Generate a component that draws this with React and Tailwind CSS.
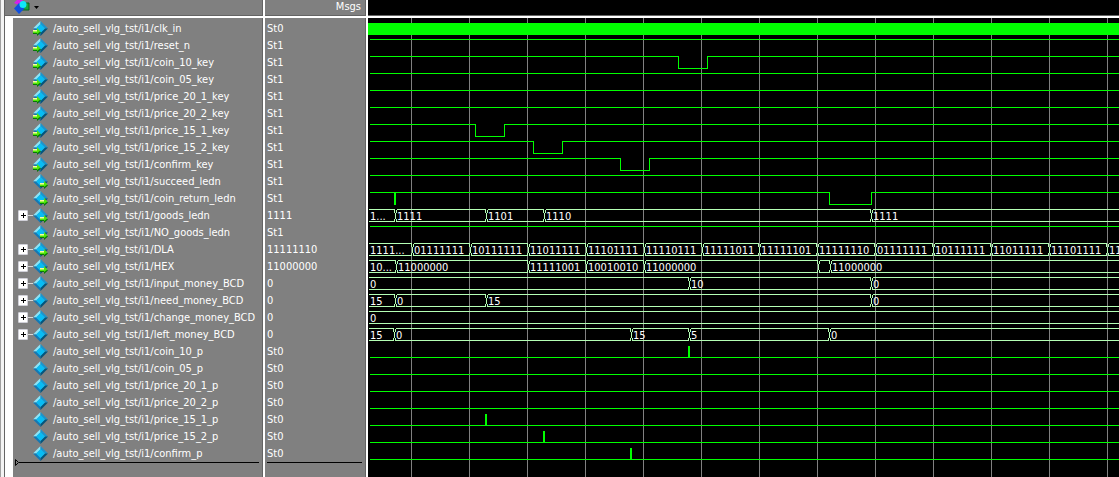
import React, { useState } from "react";

const PREFIX = "/auto_sell_vlg_tst/i1/";
const ROW = 17;
const FAR = 6000;

// kind: in / out port, or internal signal (no arrow)
// dips / pulses / steps are x positions on the wave canvas
const SIGNALS = [
  { name: "clk_in", kind: "in", value: "St0", clock: true },
  { name: "reset_n", kind: "in", value: "St1" },
  { name: "coin_10_key", kind: "in", value: "St1", dips: [[310, 339]] },
  { name: "coin_05_key", kind: "in", value: "St1" },
  { name: "price_20_1_key", kind: "in", value: "St1" },
  { name: "price_20_2_key", kind: "in", value: "St1" },
  { name: "price_15_1_key", kind: "in", value: "St1", dips: [[107, 136]] },
  { name: "price_15_2_key", kind: "in", value: "St1", dips: [[165, 194]] },
  { name: "confirm_key", kind: "in", value: "St1", dips: [[252, 281]] },
  { name: "succeed_ledn", kind: "out", value: "St1" },
  {
    name: "coin_return_ledn",
    kind: "out",
    value: "St1",
    dips: [
      [26, 27],
      [461, 503],
    ],
  },
  {
    name: "goods_ledn",
    kind: "out",
    value: "1111",
    steps: [
      [0, "1..."],
      [27, "1111"],
      [118, "1101"],
      [176, "1110"],
      [503, "1111"],
    ],
  },
  { name: "NO_goods_ledn", kind: "out", value: "St1" },
  {
    name: "DLA",
    kind: "out",
    value: "11111110",
    steps: [
      [0, "1111..."],
      [44, "01111111"],
      [102, "10111111"],
      [160, "11011111"],
      [218, "11101111"],
      [276, "11110111"],
      [334, "11111011"],
      [391, "11111101"],
      [449, "11111110"],
      [507, "01111111"],
      [565, "10111111"],
      [623, "11011111"],
      [681, "11101111"],
      [739, "11110111"],
    ],
  },
  {
    name: "HEX",
    kind: "out",
    value: "11000000",
    steps: [
      [0, "10..."],
      [28, "11000000"],
      [160, "11111001"],
      [218, "10010010"],
      [276, "11000000"],
      [450, ""],
      [462, "11000000"],
    ],
  },
  {
    name: "input_money_BCD",
    value: "0",
    steps: [
      [0, "0"],
      [321, "10"],
      [503, "0"],
    ],
  },
  {
    name: "need_money_BCD",
    value: "0",
    steps: [
      [0, "15"],
      [27, "0"],
      [118, "15"],
      [503, "0"],
    ],
  },
  { name: "change_money_BCD", value: "0", steps: [[0, "0"]] },
  {
    name: "left_money_BCD",
    value: "0",
    steps: [
      [0, "15"],
      [26, "0"],
      [263, "15"],
      [321, "5"],
      [461, "0"],
    ],
  },
  { name: "coin_10_p", value: "St0", pulses: [320] },
  { name: "coin_05_p", value: "St0" },
  { name: "price_20_1_p", value: "St0" },
  { name: "price_20_2_p", value: "St0" },
  { name: "price_15_1_p", value: "St0", pulses: [117] },
  { name: "price_15_2_p", value: "St0", pulses: [175] },
  { name: "confirm_p", value: "St0", pulses: [262] },
];

const SignalIcon = ({ kind }) => (
  <svg
    className="w-[15px] h-[15px] shrink-0"
    viewBox="0 0 15 15"
    aria-hidden="true"
  >
    <path d="M7.5 0 0 7.5h3.5l4-4z" fill="#8ce4f8" />
    <path d="M7.5 0 15 7.5h-3.5l-4-4z" fill="#1c94cc" />
    <path d="M0 7.5 7.5 15v-3.5l-4-4z" fill="#1478b4" />
    <path d="M15 7.5 7.5 15v-3.5l4-4z" fill="#04557c" />
    <path d="m7.5 3 4.5 4.5L7.5 12 3 7.5z" fill="#08bcf4" />
    {kind && (
      <g transform={kind === "in" ? "translate(0 7)" : "translate(7 7)"}>
        <path d="M0 3h4V1l4 3.5L4 8V6H0z" fill="#087808" />
        <path d="M0 2h4V0l3.5 3.5L4 6V5H0z" fill="#50e808" />
        <path d="M0 2h4v1.5H0z" fill="#f8fca0" />
      </g>
    )}
  </svg>
);

const ObjectsIcon = () => (
  <svg className="w-4 h-[14px]" viewBox="0 0 16 14" aria-hidden="true">
    <path d="M3 0h6L5 5 0 3z" fill="#d820e8" />
    <path d="M8 3h7v7H8z" fill="#18a838" stroke="#0a6020" />
    <path d="m5 3 5.5 5.5L5 14 0 8.5z" fill="#1050e0" />
    <circle cx="9" cy="4.5" r="3.5" fill="#10e8f8" />
  </svg>
);

const NameRow = ({ signal }) => {
  const [open, setOpen] = useState(false);
  return (
    <li className="flex items-center h-[17px] pl-[5px]">
      {signal.steps ? (
        <>
          <button
            type="button"
            aria-label={`Expand ${signal.name}`}
            aria-expanded={open}
            onClick={() => setOpen(!open)}
            className="flex items-center justify-center w-[10px] h-[11px] rounded-[1px] border border-[#d0d0d8] bg-white"
          >
            <svg className="w-[5px] h-[5px]" viewBox="0 0 5 5">
              <path d="M2 0h1v2h2v1H3v2H2V3H0V2h2z" fill="#000" />
            </svg>
          </button>
          <span className="w-[5px] h-px bg-[#d8d8d8]" />
        </>
      ) : (
        <span className="w-[15px]" />
      )}
      <SignalIcon kind={signal.kind} />
      <span className="pl-[5px]">
        {PREFIX}
        {signal.name}
      </span>
    </li>
  );
};

const scalarPath = (y, dips = []) =>
  `M1 ${y}` +
  dips.map(([a, b]) => `H${a}V${y + 12}H${b}V${y}`).join("") +
  `H${FAR}`;

// one closed-looking cell of a bus, notched at both ends
const busCell = (a, b, y) => {
  const left = a === 0 ? 0 : a + 1;
  const right = b - 1;
  const edge = (x, turn) =>
    `M${x} ${y}v3M${x + turn} ${y + 3}v6M${x} ${y + 9}v3`;
  return (
    `M${left} ${y}H${right}M${left} ${y + 12}H${right}` +
    (a === 0 ? "" : edge(left, -1)) +
    (b === FAR ? "" : edge(right, 1))
  );
};

const Trace = ({ signal, top }) => {
  if (signal.clock) {
    return <rect x="0" y={top + 3} width="100%" height="12" fill="#00ff00" />;
  }
  if (signal.steps) {
    const d = signal.steps
      .map(([x], i) => {
        const next = signal.steps[i + 1];
        return busCell(x, next ? next[0] : FAR, top + 2);
      })
      .join("");
    return (
      <g>
        <path d={d} transform="translate(.5 .5)" stroke="#b4ffb4" fill="none" />
        {signal.steps.map(([x, label]) => (
          <text key={x} x={x + 2} y={top + 13} fill="#fff">
            {label}
          </text>
        ))}
      </g>
    );
  }
  const low = signal.value === "St0";
  return (
    <g>
      <path
        d={scalarPath(low ? top + 14 : top + 2, signal.dips)}
        transform="translate(.5 .5)"
        stroke="#00ff00"
        fill="none"
      />
      {(signal.pulses || []).map((x) => (
        <rect key={x} x={x} y={top + 3} width="2" height="12" fill="#00ff00" />
      ))}
    </g>
  );
};

const WaveCanvas = () => (
  <svg
    className="block w-full h-[459px] grow bg-black"
    role="img"
    aria-label="Waveforms"
    shapeRendering="crispEdges"
  >
    <defs>
      <pattern
        id="grid"
        x="43"
        y="0"
        width="58"
        height="58"
        patternUnits="userSpaceOnUse"
      >
        <rect width="1" height="58" fill="#808080" />
      </pattern>
    </defs>
    <rect width="100%" height="100%" fill="url(#grid)" />
    {SIGNALS.map((s, i) => (
      <Trace key={s.name} signal={s} top={2 + i * ROW} />
    ))}
  </svg>
);

export default function App() {
  return (
    <main className="flex min-h-screen overflow-hidden bg-[#808080] font-['DejaVu_Sans_Condensed','DejaVu_Sans',sans-serif] text-[11px] leading-[17px] text-white whitespace-nowrap">
      <div className="w-[5px] shrink-0 border-l border-r border-l-[#a0a0a0] border-r-[#646464] bg-[#f4f4f4]" />

      <section className="flex flex-col w-[260px] shrink-0 border-r-2 border-white">
        <header className="flex items-start h-[18px] pl-[9px] border-b-2 border-white shadow-[inset_0_-1px_#646464,inset_-1px_0_#646464]">
          <button
            type="button"
            aria-label="Object filter"
            className="flex items-center gap-1"
          >
            <ObjectsIcon />
            <svg className="w-[5px] h-[3px]" viewBox="0 0 5 3">
              <path d="M0 0h5L2.5 3z" fill="#000" />
            </svg>
          </button>
        </header>
        <div className="grow border-l-8 border-white pt-[2px] shadow-[inset_-1px_0_#646464]">
          <ul>
            {SIGNALS.map((s) => (
              <NameRow key={s.name} signal={s} />
            ))}
          </ul>
          <div className="flex items-center h-px pl-[2px] pr-1">
            <svg className="w-1 h-[7px] shrink-0" viewBox="0 0 4 7">
              <path d="M.5.5v6l3-3z" fill="none" stroke="#000" />
            </svg>
            <span className="grow h-px bg-black" />
          </div>
        </div>
      </section>

      <section className="flex flex-col w-[103px] shrink-0 border-r-2 border-white">
        <header className="h-[18px] pr-[5px] border-b-2 border-white text-right leading-[13px] shadow-[inset_0_-1px_#646464,inset_-1px_0_#646464]">
          Msgs
        </header>
        <div className="grow pt-[2px] pl-[2px] pr-1 shadow-[inset_-1px_0_#646464]">
          <ul>
            {SIGNALS.map((s) => (
              <li key={s.name} className="h-[17px]">
                {s.value}
              </li>
            ))}
          </ul>
          <div className="h-px bg-black" />
        </div>
      </section>

      <section className="flex flex-col grow min-w-0 bg-black">
        <div className="h-[18px] shrink-0 border-b-2 border-white shadow-[inset_0_-1px_#646464]" />
        <WaveCanvas />
      </section>
    </main>
  );
}
